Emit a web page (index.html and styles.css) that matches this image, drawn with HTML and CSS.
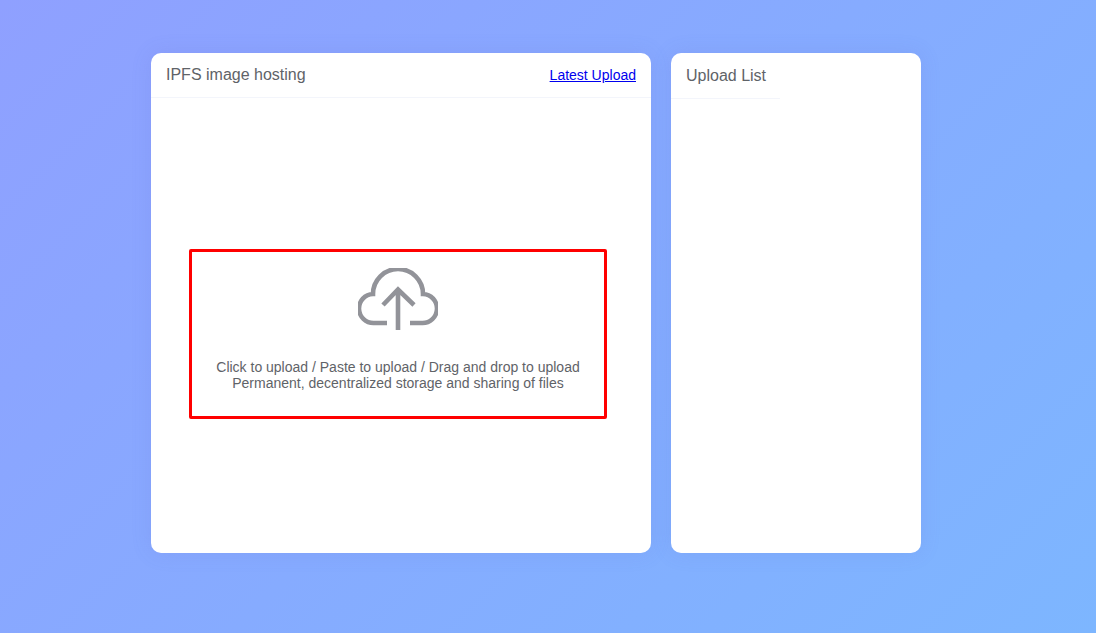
FILE: index.html
```html
<!DOCTYPE html>
<html lang="en">

<head>
    <meta charset="UTF-8">
    <meta name="viewport" content="width=device-width, initial-scale=1.0">
    <title>IPFS image hosting</title>
    <link rel="stylesheet" href="styles.css">
</head>

<body>
    <div class="wrapper">
        <!-- Upload card -->
        <div class="card upload-card">
            <div class="card-header">
                <span class="card-title">IPFS image hosting</span>
                <a class="latest-link" href="#">Latest Upload</a>
            </div>
            <div class="card-body">
                <div class="drop-zone">
                    <svg class="cloud-icon" viewBox="0 0 80 62" width="80" height="62" fill="none" stroke="#929399" stroke-width="4.6">
                        <path d="M29 55H16A14.5 14.5 0 0 1 15 26A25 25 0 0 1 65 26A14.5 14.5 0 0 1 64 55H52" />
                        <path d="M40 62V22M25 37L40 21.5L56 37" />
                    </svg>
                    <p class="drop-text">Click to upload / Paste to upload / Drag and drop to upload<br>Permanent, decentralized storage and sharing of files</p>
                </div>
            </div>
        </div>

        <!-- Upload list card -->
        <div class="card list-card">
            <div class="list-header">Upload List</div>
        </div>
    </div>
</body>

</html>
```

FILE: styles.css
```css
* {
    box-sizing: border-box;
    margin: 0;
    padding: 0;
}

body {
    font-family: "Liberation Sans", Arial, sans-serif;
    height: 100vh;
    overflow: hidden;
    background: linear-gradient(135deg, #8fa0ff 0%, #7db6ff 100%);
}

.wrapper {
    display: flex;
    justify-content: center;
    gap: 20px;
    padding: 53px 24px 0 0;
}

.card {
    height: 500px;
    background-color: #fff;
    border-radius: 10px;
    box-shadow: 0 0 20px rgba(100, 110, 200, 0.15);
}

.upload-card {
    width: 500px;
}

.list-card {
    width: 250px;
}

.card-header {
    display: flex;
    justify-content: space-between;
    align-items: center;
    height: 45px;
    padding: 0 15px;
    border-bottom: 1px solid #f3f5fb;
}

.card-title {
    font-size: 16px;
    color: #5f6368;
}

.latest-link {
    font-size: 14px;
    color: #0000ee;
}

.card-body {
    padding: 151px 0 0 38px;
}

.drop-zone {
    display: flex;
    flex-direction: column;
    align-items: center;
    width: 418px;
    height: 170px;
    padding-top: 16px;
    border: 3px solid #f00;
    border-radius: 2px;
}

.cloud-icon {
    display: block;
}

.drop-text {
    margin-top: 29px;
    font-size: 14px;
    line-height: 16px;
    text-align: center;
    color: #5f6368;
}

.list-header {
    width: 109px;
    height: 46px;
    padding: 0 15px;
    line-height: 45px;
    font-size: 16px;
    color: #5f6368;
    white-space: nowrap;
    border-bottom: 1px solid #f3f5fb;
}
```
